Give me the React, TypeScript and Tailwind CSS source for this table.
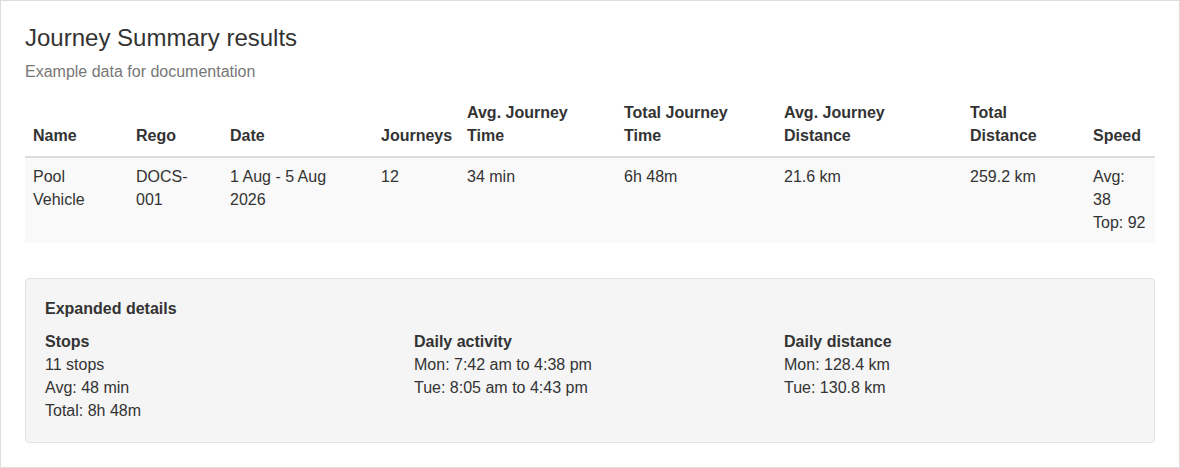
import React from 'react';

const COLS = [
  { key: 'name', label: ['Name'], w: 'w-[103px]' },
  { key: 'rego', label: ['Rego'], w: 'w-[94px]' },
  { key: 'date', label: ['Date'], w: 'w-[151px]' },
  { key: 'journeys', label: ['Journeys'], w: 'w-[86px]' },
  { key: 'avgTime', label: ['Avg. Journey', 'Time'], w: 'w-[157px]' },
  { key: 'totalTime', label: ['Total Journey', 'Time'], w: 'w-[160px]' },
  { key: 'avgDist', label: ['Avg. Journey', 'Distance'], w: 'w-[186px]' },
  { key: 'totalDist', label: ['Total', 'Distance'], w: 'w-[123px]' },
  { key: 'speed', label: ['Speed'], w: 'w-[70px]' },
];

const ROW: Record<string, string[]> = {
  name: ['Pool', 'Vehicle'],
  rego: ['DOCS-', '001'],
  date: ['1 Aug - 5 Aug', '2026'],
  journeys: ['12'],
  avgTime: ['34 min'],
  totalTime: ['6h 48m'],
  avgDist: ['21.6 km'],
  totalDist: ['259.2 km'],
  speed: ['Avg:', '38', 'Top: 92'],
};

const DETAILS = [
  { title: 'Stops', lines: ['11 stops', 'Avg: 48 min', 'Total: 8h 48m'], w: 'w-[369px]' },
  { title: 'Daily activity', lines: ['Mon: 7:42 am to 4:38 pm', 'Tue: 8:05 am to 4:43 pm'], w: 'w-[370px]' },
  { title: 'Daily distance', lines: ['Mon: 128.4 km', 'Tue: 130.8 km'], w: 'flex-1' },
];

const Lines = ({ lines }: { lines: string[] }) => (
  <>
    {lines.map((l, i) => (
      <div key={i}>{l}</div>
    ))}
  </>
);

export default function App() {
  return (
    <div className="h-[468px] w-[1180px] border border-[#dddddd] bg-white px-[24px] pt-[24px] text-[#333333] font-['Liberation_Sans',Arial,sans-serif]">
      <h3 className="text-[24px] leading-[1.1] font-normal">Journey Summary results</h3>
      <p className="mt-[11px] text-[16px] leading-[20px] text-[#777777]">Example data for documentation</p>

      {/* summary table */}
      <table className="mt-[12px] w-[1130px] table-fixed border-collapse text-[16px] leading-[1.42857]">
        <thead>
          <tr>
            {COLS.map((c) => (
              <th
                key={c.key}
                className={`${c.w} border-b-2 border-[#dddddd] p-2 text-left align-bottom font-bold whitespace-nowrap`}
              >
                <Lines lines={c.label} />
              </th>
            ))}
          </tr>
        </thead>
        <tbody>
          <tr className="bg-[#f9f9f9]">
            {COLS.map((c) => (
              <td key={c.key} className="p-2 align-top whitespace-nowrap">
                <Lines lines={ROW[c.key]} />
              </td>
            ))}
          </tr>
        </tbody>
      </table>

      {/* expanded details */}
      <div className="mt-[35px] w-[1130px] rounded border border-[#e3e3e3] bg-[#f5f5f5] px-[19px] pt-[19px] pb-[19px] text-[16px] leading-[1.42857]">
        <div className="font-bold">Expanded details</div>
        <div className="mt-[11px] flex">
          {DETAILS.map((d) => (
            <div key={d.title} className={d.w}>
              <div className="font-bold">{d.title}</div>
              <Lines lines={d.lines} />
            </div>
          ))}
        </div>
      </div>
    </div>
  );
}
